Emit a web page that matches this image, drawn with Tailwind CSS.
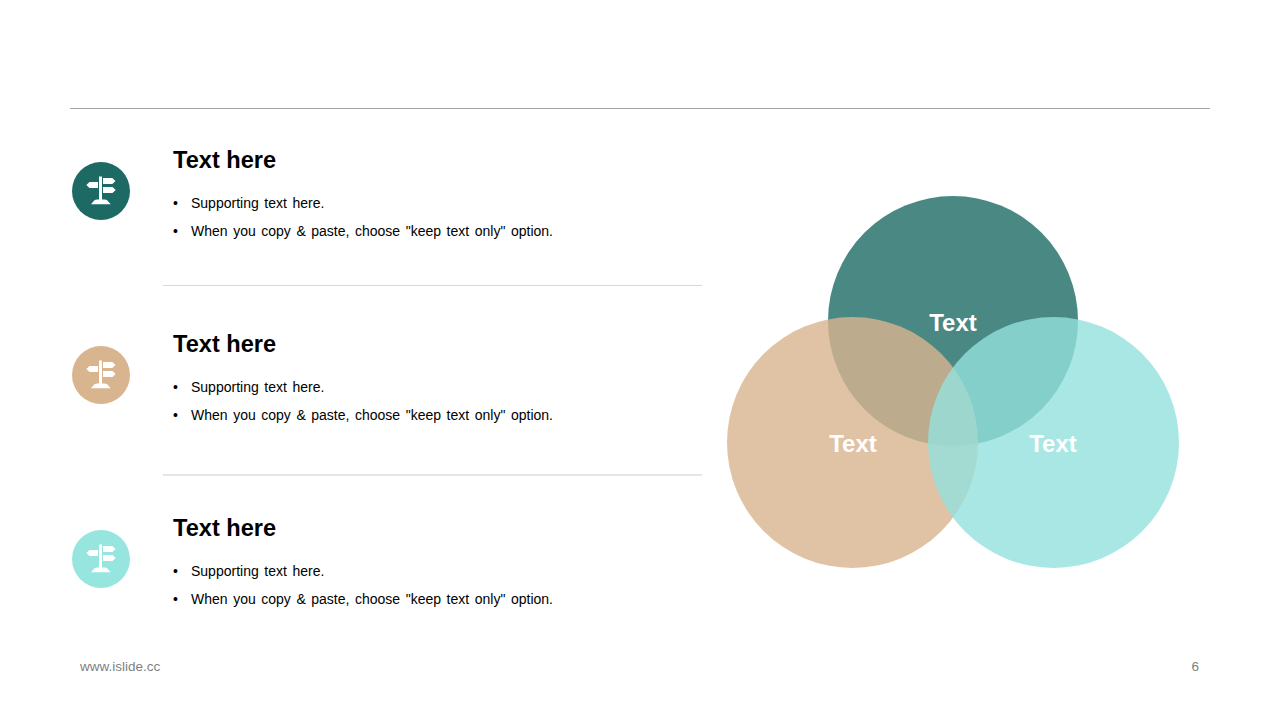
<!DOCTYPE html>
<html lang="en">
<head>
    <meta charset="UTF-8">
    <title>Slide 6</title>
    <script src="https://cdn.jsdelivr.net/npm/@tailwindcss/browser@4"></script>
</head>
<body class="bg-white font-['Liberation_Sans',Arial,sans-serif] text-black">
    <div class="w-[1280px] h-[720px] overflow-hidden flex flex-col px-[70px] pt-[108px]">
        <div class="h-px bg-[#a6a6a6]"></div>

        <main class="flex flex-1">
            <!-- left list -->
            <div class="w-[632px] flex flex-col">
                <section class="h-[177px] flex border-b border-[#d9d9d9] ml-[93px] pl-[10px] relative">
                    <div class="absolute left-[-91px] top-[53px] w-[58px] h-[58px] rounded-full bg-[#1d6a64]">
                        <svg width="58" height="58" viewBox="0 0 58 58" fill="#fff"><path d="M27 14.5h3v24h-3z"/><path d="M26 20H17.5l-3.2 3 3.2 3H26z"/><path d="M31 16h9.3l3.2 3-3.2 3H31z"/><path d="M31 25h9.5l3.2 3-3.2 3H31z"/><path d="M25 37.6h7.6c1.8 0 3 .9 3.6 1.9l2.5 2.8H19l2.4-2.8c.7-1 1.8-1.9 3.6-1.9z"/></svg>
                    </div>
                    <div>
                        <h2 class="text-[23.6px] leading-[28px] font-bold mt-[37px]">Text here</h2>
                        <ul class="mt-[15px] text-[14px] leading-[28px] [word-spacing:1.67px]">
                            <li class="flex"><span class="w-[18px]">•</span>Supporting text here.</li>
                            <li class="flex"><span class="w-[18px]">•</span>When you copy &amp; paste, choose "keep text only" option.</li>
                        </ul>
                    </div>
                </section>
                <section class="h-[190px] flex border-b-2 border-[#e6e6e6] ml-[93px] pl-[10px] relative">
                    <div class="absolute left-[-91px] top-[60px] w-[58px] h-[58px] rounded-full bg-[#d8b48f]">
                        <svg width="58" height="58" viewBox="0 0 58 58" fill="#fff"><path d="M27 14.5h3v24h-3z"/><path d="M26 20H17.5l-3.2 3 3.2 3H26z"/><path d="M31 16h9.3l3.2 3-3.2 3H31z"/><path d="M31 25h9.5l3.2 3-3.2 3H31z"/><path d="M25 37.6h7.6c1.8 0 3 .9 3.6 1.9l2.5 2.8H19l2.4-2.8c.7-1 1.8-1.9 3.6-1.9z"/></svg>
                    </div>
                    <div>
                        <h2 class="text-[23.6px] leading-[28px] font-bold mt-[44px]">Text here</h2>
                        <ul class="mt-[15px] text-[14px] leading-[28px] [word-spacing:1.67px]">
                            <li class="flex"><span class="w-[18px]">•</span>Supporting text here.</li>
                            <li class="flex"><span class="w-[18px]">•</span>When you copy &amp; paste, choose "keep text only" option.</li>
                        </ul>
                    </div>
                </section>
                <section class="flex ml-[93px] pl-[10px] relative">
                    <div class="absolute left-[-91px] top-[54px] w-[58px] h-[58px] rounded-full bg-[#97e5df]">
                        <svg width="58" height="58" viewBox="0 0 58 58" fill="#fff"><path d="M27 14.5h3v24h-3z"/><path d="M26 20H17.5l-3.2 3 3.2 3H26z"/><path d="M31 16h9.3l3.2 3-3.2 3H31z"/><path d="M31 25h9.5l3.2 3-3.2 3H31z"/><path d="M25 37.6h7.6c1.8 0 3 .9 3.6 1.9l2.5 2.8H19l2.4-2.8c.7-1 1.8-1.9 3.6-1.9z"/></svg>
                    </div>
                    <div>
                        <h2 class="text-[23.6px] leading-[28px] font-bold mt-[38px]">Text here</h2>
                        <ul class="mt-[15px] text-[14px] leading-[28px] [word-spacing:1.67px]">
                            <li class="flex"><span class="w-[18px]">•</span>Supporting text here.</li>
                            <li class="flex"><span class="w-[18px]">•</span>When you copy &amp; paste, choose "keep text only" option.</li>
                        </ul>
                    </div>
                </section>
            </div>

            <!-- venn diagram -->
            <div class="relative flex-1">
                <div class="absolute left-[126px] top-[87px] w-[250px] h-[250px] rounded-full bg-[#1d6a64]/80"></div>
                <div class="absolute left-[25px] top-[208px] w-[251px] h-[251px] rounded-full bg-[#d8b48f]/80"></div>
                <div class="absolute left-[225.5px] top-[208px] w-[251px] h-[251px] rounded-full bg-[#94e1dd]/80"></div>
                <span class="absolute left-[126px] w-[250px] top-[200px] text-center text-[24px] leading-[28px] font-bold text-white">Text</span>
                <span class="absolute left-[26px] w-[250px] top-[321px] text-center text-[24px] leading-[28px] font-bold text-white">Text</span>
                <span class="absolute left-[226px] w-[250px] top-[321px] text-center text-[24px] leading-[28px] font-bold text-white">Text</span>
            </div>
        </main>

        <footer class="h-[65px] flex justify-between pl-[10px] pr-[11px] pt-[4px] text-[13.5px] leading-[16px] text-[#7f7f7f]">
            <span>www.islide.cc</span>
            <span>6</span>
        </footer>
    </div>
</body>
</html>
